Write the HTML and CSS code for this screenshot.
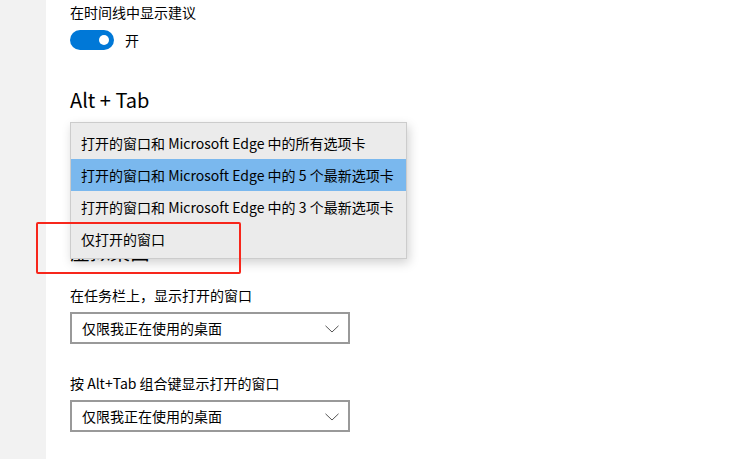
FILE: index.html
```html
<!DOCTYPE html>
<html lang="zh-CN">
<head>
<meta charset="utf-8">
<title>多任务处理</title>
<link rel="stylesheet" href="styles.css">
</head>
<body>
<div class="app">
  <aside class="sidebar"></aside>
  <main class="main">
    <div class="label first">在时间线中显示建议</div>
    <div class="toggle-row">
      <span class="toggle"><span class="knob"></span></span>
      <span class="toggle-text">开</span>
    </div>
    <h2 class="heading alt-tab">Alt + Tab</h2>
    <div class="select-spacer"></div>
    <h2 class="heading vd">虚拟桌面</h2>
    <div class="label l2">在任务栏上，显示打开的窗口</div>
    <div class="select">
      <span class="select-text">仅限我正在使用的桌面</span>
      <svg class="chev" width="14" height="8" viewBox="0 0 14 8"><path d="M0.5 0.8 L7 7 L13.5 0.8" fill="none" stroke="#555" stroke-width="1"/></svg>
    </div>
    <div class="label l3">按 Alt+Tab 组合键显示打开的窗口</div>
    <div class="select">
      <span class="select-text">仅限我正在使用的桌面</span>
      <svg class="chev" width="14" height="8" viewBox="0 0 14 8"><path d="M0.5 0.8 L7 7 L13.5 0.8" fill="none" stroke="#555" stroke-width="1"/></svg>
    </div>
  </main>
</div>
<ul class="popup">
  <li class="item">打开的窗口和 Microsoft Edge 中的所有选项卡</li>
  <li class="item selected">打开的窗口和 Microsoft Edge 中的 5 个最新选项卡</li>
  <li class="item">打开的窗口和 Microsoft Edge 中的 3 个最新选项卡</li>
  <li class="item">仅打开的窗口</li>
</ul>
<div class="red-box"></div>
</body>
</html>
```

FILE: styles.css
```css
html, body {
  margin: 0;
  padding: 0;
  background: #ffffff;
}
body {
  width: 753px;
  height: 459px;
  overflow: hidden;
  position: relative;
  font-family: "Noto Sans CJK SC", "Noto Sans", sans-serif;
  color: #000;
}
.app {
  display: flex;
  height: 459px;
}
.sidebar {
  width: 46px;
  flex: 0 0 46px;
  background: #f2f2f2;
}
.main {
  flex: 1;
  padding-left: 24px;
  display: flex;
  flex-direction: column;
  align-items: flex-start;
}
.label {
  font-size: 14px;
  line-height: 20px;
  height: 20px;
}
.label.first { margin-top: 2px; }
.toggle-row {
  margin-top: 8px;
  height: 20px;
  display: flex;
  align-items: center;
}
.toggle {
  width: 44px;
  height: 20px;
  border-radius: 10px;
  background: #0078d7;
  display: flex;
  align-items: center;
  justify-content: flex-end;
  padding-right: 5px;
  box-sizing: border-box;
}
.knob {
  width: 10px;
  height: 10px;
  border-radius: 50%;
  background: #fff;
}
.toggle-text {
  margin-left: 11px;
  font-size: 14px;
  line-height: 20px;
}
.heading {
  margin: 0;
  font-weight: 400;
  font-size: 20px;
  line-height: 28px;
  height: 28px;
}
.alt-tab { margin-top: 36px; }
.select-spacer { height: 124px; }
.label.l2 { margin-top: 19px; }
.label.l3 { margin-top: 29px; }
.select {
  margin-top: 7px;
  width: 280px;
  height: 32px;
  box-sizing: border-box;
  border: 2px solid #999999;
  display: flex;
  align-items: center;
  justify-content: space-between;
  padding: 0 9px 0 10px;
}
.select-text {
  font-size: 14px;
  line-height: 20px;
}
.chev { display: block; margin-top: 1px; }
.popup {
  position: absolute;
  left: 70px;
  top: 122px;
  width: 337px;
  height: 137px;
  box-sizing: border-box;
  margin: 0;
  padding: 4px 0 0 0;
  list-style: none;
  background: #ebebeb;
  border: 1px solid #cccccc;
  box-shadow: 2px 4px 10px rgba(0,0,0,0.18);
}
.item {
  height: 32px;
  line-height: 32px;
  padding-left: 10px;
  font-size: 14px;
  white-space: nowrap;
}
.item.selected {
  background: #7ab8ee;
}
.red-box {
  position: absolute;
  left: 36px;
  top: 222px;
  width: 205px;
  height: 52px;
  box-sizing: border-box;
  border: 2.5px solid #f7261b;
  border-radius: 2px;
}
```
